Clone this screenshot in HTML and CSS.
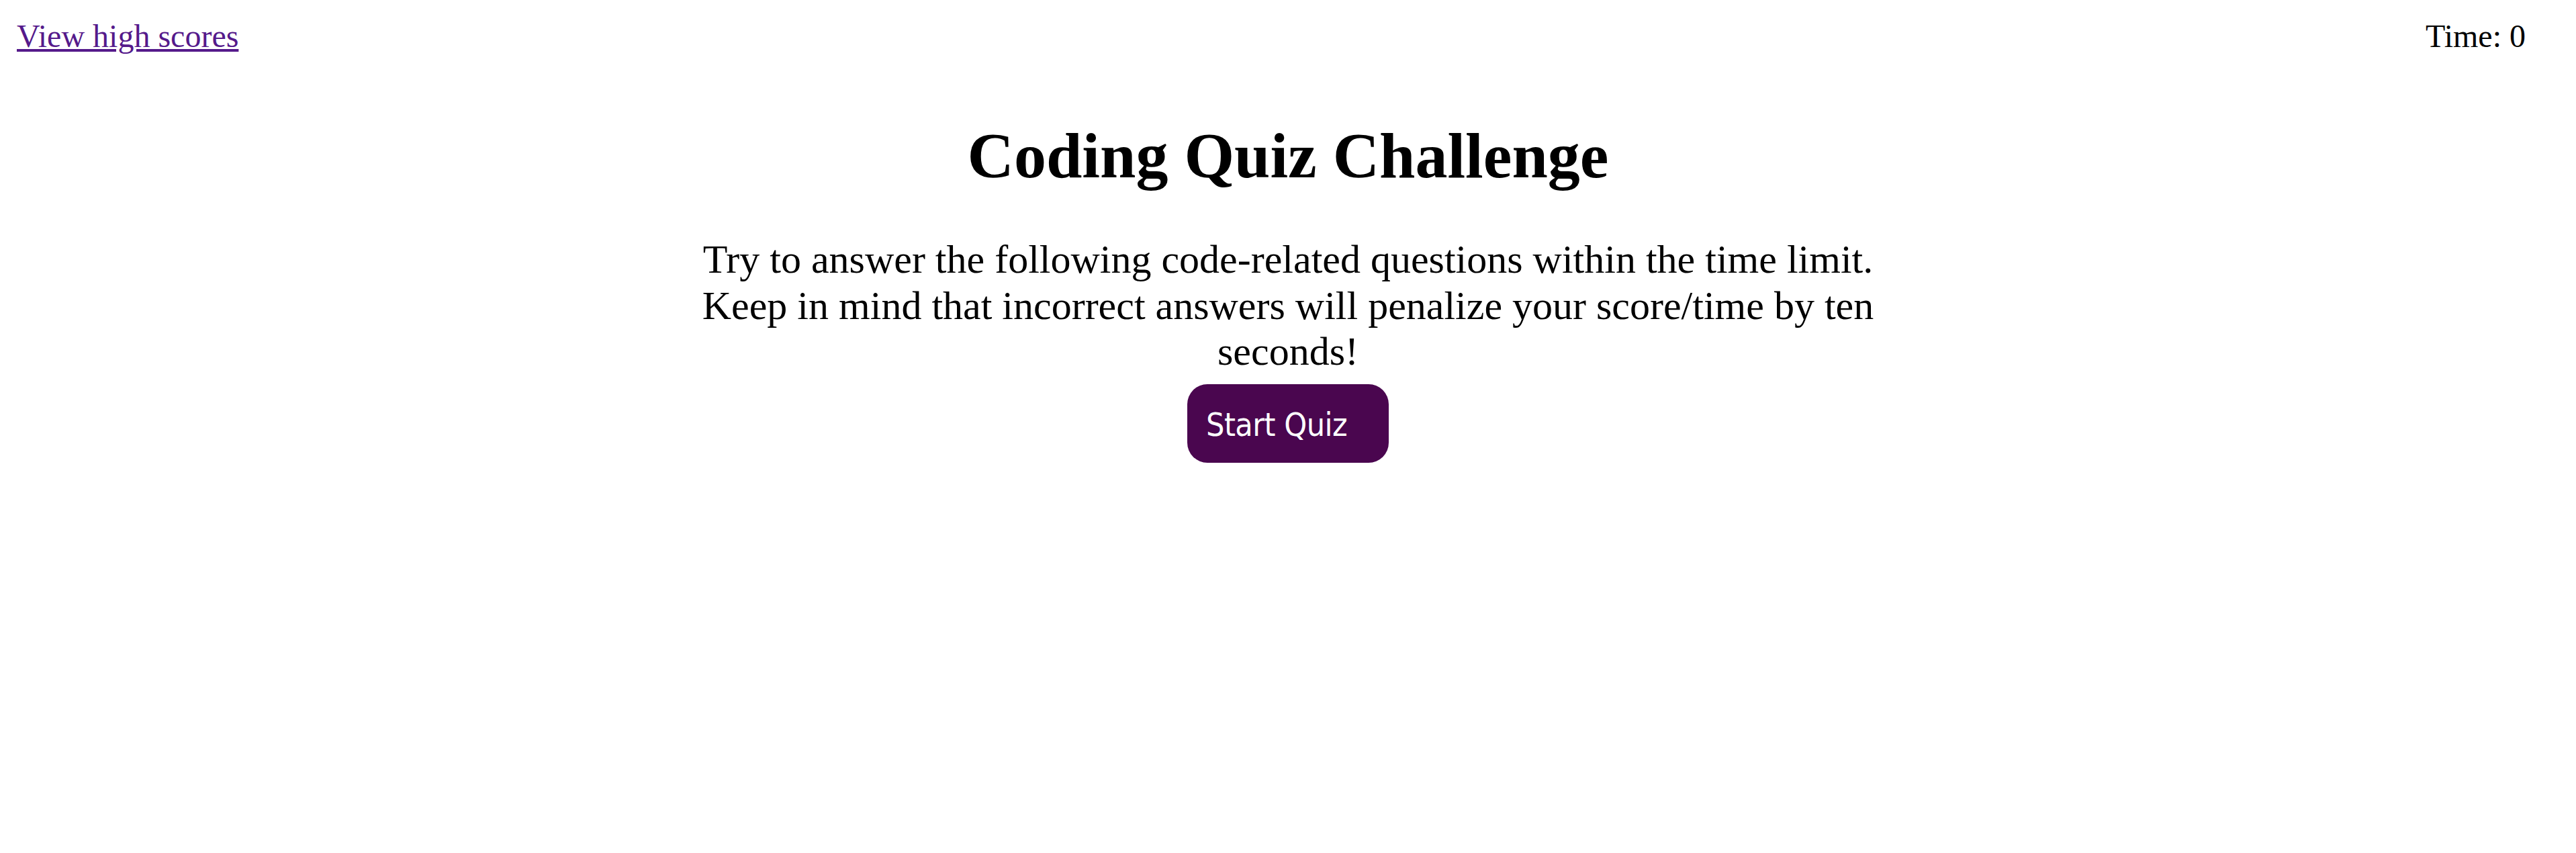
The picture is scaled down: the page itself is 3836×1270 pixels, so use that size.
FILE: index.html
```html
<!DOCTYPE html>
<html lang="en">
<head>
<meta charset="utf-8">
<title>Coding Quiz Challenge</title>
<link rel="stylesheet" href="styles.css">
</head>
<body>
<header class="top-bar">
  <a class="scores-link" href="#">View high scores</a>
  <div class="timer">Time: <span class="timer-value">0</span></div>
</header>
<main class="intro">
  <h1 class="title">Coding Quiz Challenge</h1>
  <p class="lead">Try to answer the following code-related questions within the time limit. Keep in mind that incorrect answers will penalize your score/time by ten seconds!</p>
  <button class="start-btn" type="button">Start Quiz</button>
</main>
</body>
</html>
```

FILE: styles.css
```css
html, body {
  margin: 0;
  padding: 0;
  background: #ffffff;
}

body {
  font-family: "Liberation Serif", "Times New Roman", serif;
  color: #000000;
}

.top-bar {
  display: flex;
  justify-content: space-between;
  align-items: baseline;
  padding: 26px 75px 0 25px;
  font-size: 48px;
  line-height: 55px;
}

.scores-link {
  color: #551a8b;
  text-decoration: underline;
}

.intro {
  display: flex;
  flex-direction: column;
  align-items: center;
  text-align: center;
}

.title {
  font-size: 96px;
  line-height: 110px;
  font-weight: bold;
  margin: 96px 0 65px;
}

.lead {
  font-size: 60px;
  line-height: 68.5px;
  width: 1800px;
  margin: 0;
}

.start-btn {
  margin-top: 14px;
  box-sizing: border-box;
  width: 300px;
  padding: 32px 0 28px 28px;
  border: none;
  border-radius: 30px;
  background: #4a064f;
  color: #ffffff;
  font-family: "DejaVu Sans Condensed", "DejaVu Sans", sans-serif;
  font-stretch: condensed;
  font-size: 48px;
  letter-spacing: -0.5px;
  line-height: 57px;
  text-align: left;
  cursor: pointer;
}
```
